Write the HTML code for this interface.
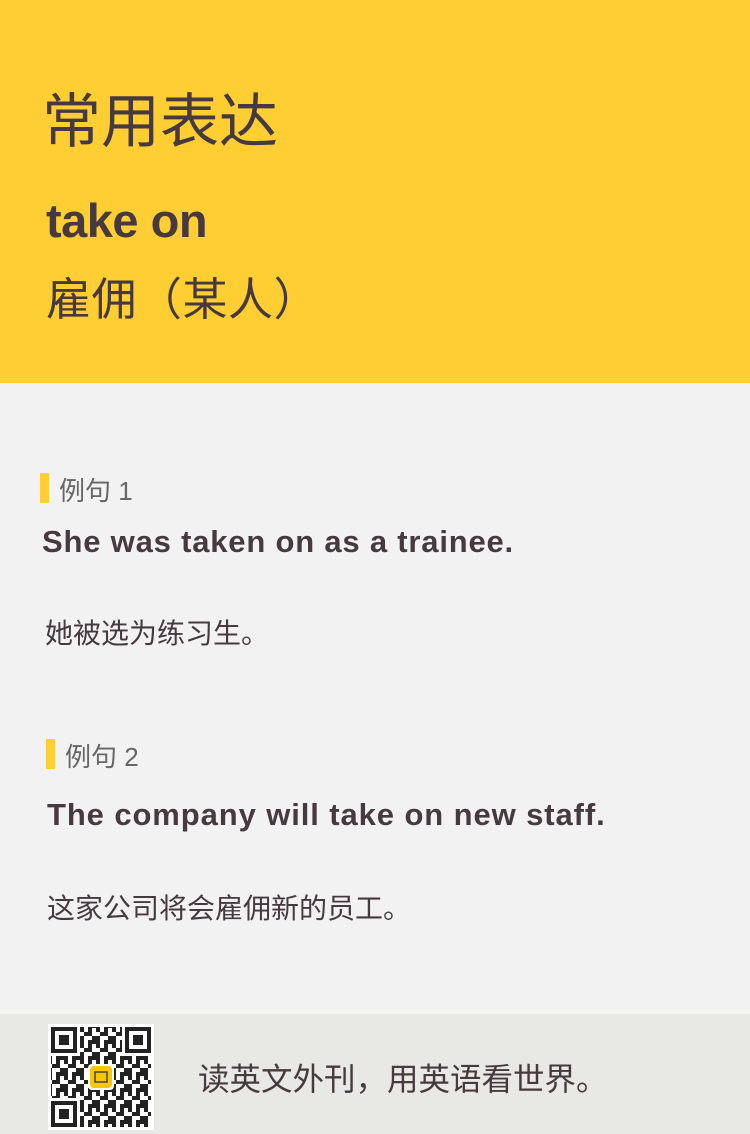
<!DOCTYPE html>
<html><head><meta charset="utf-8"><style>
*{margin:0;padding:0;box-sizing:border-box}
body{width:750px;height:1134px;background:#f3f2f2;font-family:"Liberation Sans","Noto Sans CJK SC",sans-serif;color:#463a40;position:relative;overflow:hidden}
.top{position:absolute;left:0;top:0;width:750px;height:383px;background:#ffce32}
.t{position:absolute;white-space:nowrap}
.bar{position:absolute;width:9px;height:30px;background:#ffce32}
.foot{position:absolute;left:0;top:1014px;width:750px;height:120px;background:#e8e8e4}
</style></head><body>
<div class="top">
<div class="t" style="left:42px;top:74px;font-size:59px;">常用表达</div>
<div class="t" style="left:46px;top:193px;font-size:47px;font-weight:bold;letter-spacing:-0.5px">take on</div>
<div class="t" style="left:46px;top:263px;font-size:45px;letter-spacing:0.5px">雇佣（某人）</div>
</div>
<div class="bar" style="left:40px;top:473px"></div>
<div class="t" style="left:59px;top:471px;font-size:26px;color:#666">例句 1</div>
<div class="t" style="left:42px;top:524px;font-size:31px;font-weight:bold;letter-spacing:0.8px">She was taken on as a trainee.</div>
<div class="t" style="left:45px;top:612px;font-size:28px;">她被选为练习生。</div>
<div class="bar" style="left:46px;top:739px"></div>
<div class="t" style="left:65px;top:737px;font-size:26px;color:#666">例句 2</div>
<div class="t" style="left:47px;top:797px;font-size:31px;font-weight:bold;letter-spacing:0.9px">The company will take on new staff.</div>
<div class="t" style="left:47px;top:887px;font-size:28px;">这家公司将会雇佣新的员工。</div>
<div class="foot">
<svg style="position:absolute;left:48px;top:10px" width="106" height="106" viewBox="0 0 106 106">
<defs><pattern id="p" width="16" height="16" patternUnits="userSpaceOnUse">
<rect width="16" height="16" fill="#fff"/>
<rect x="0" y="0" width="4" height="8" fill="#222"/><rect x="8" y="0" width="8" height="4" fill="#222"/>
<rect x="4" y="8" width="8" height="4" fill="#222"/><rect x="12" y="12" width="4" height="4" fill="#222"/>
<rect x="0" y="12" width="4" height="4" fill="#222"/><rect x="8" y="4" width="4" height="4" fill="#222"/>
</pattern></defs>
<rect width="106" height="106" fill="#fff"/>
<rect x="3" y="3" width="100" height="100" fill="url(#p)"/>
<g fill="#fff"><rect x="2" y="2" width="30" height="30"/><rect x="74" y="2" width="30" height="30"/><rect x="2" y="74" width="30" height="30"/></g>
<g fill="none" stroke="#222" stroke-width="4"><rect x="5" y="5" width="22" height="22"/><rect x="79" y="5" width="22" height="22"/><rect x="5" y="79" width="22" height="22"/></g>
<g fill="#222"><rect x="11" y="11" width="10" height="10"/><rect x="85" y="11" width="10" height="10"/><rect x="11" y="85" width="10" height="10"/></g>
<rect x="40" y="40" width="26" height="26" rx="4" fill="#fff"/>
<rect x="42" y="42" width="22" height="22" rx="4" fill="#f7c800"/>
<rect x="47" y="48" width="12" height="10" fill="none" stroke="#444" stroke-width="1.5"/>
</svg>
<div class="t" style="left:198px;top:40px;font-size:31.5px;">读英文外刊，用英语看世界。</div>
</div>
</body></html>
